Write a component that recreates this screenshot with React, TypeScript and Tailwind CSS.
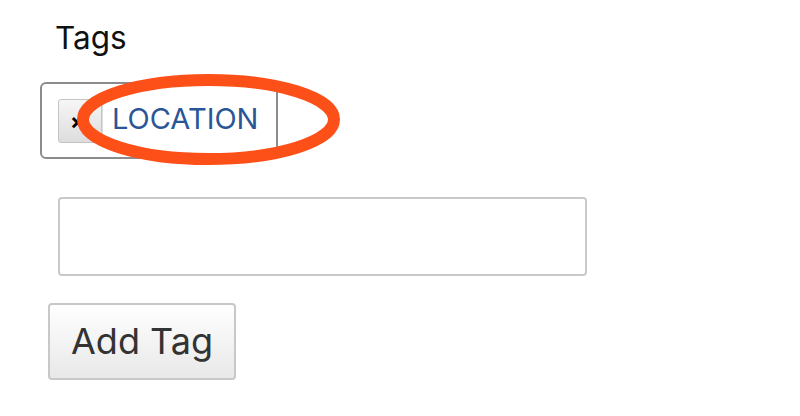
import React from "react"

function Highlight() {
  return (
    <svg className="absolute left-0 top-0 pointer-events-none" width={800} height={416} viewBox="0 0 800 416">
      <ellipse cx={208.5} cy={119.5} rx={125.5} ry={39.5} fill="none" stroke="#fd4f18" strokeWidth={12} />
    </svg>
  )
}

export default function App() {
  return (
    <main className="relative w-[800px] h-[416px] bg-white font-['Inter','Lato',sans-serif] overflow-hidden">
      <div className="flex flex-col items-start">
        {/* Label */}
        <label className="ml-[55px] mt-[22px] text-[31.5px] leading-[31px] text-[#111]">Tags</label>

        {/* Tag list */}
        <div className="ml-[40px] mt-[29px] w-[238px] h-[77px] border-2 border-[#8c8c8c] rounded-[6px] flex items-center pl-[16px]">
          <button className="w-[44px] h-[44px] border border-[#c4c4c4] rounded-[3px] bg-gradient-to-b from-[#f6f6f6] to-[#dddddd] flex items-center pl-[11px] text-[22px] font-bold leading-none text-black">
            ×
          </button>
          <span className="h-[54px] flex items-center border-l border-[#dddddd] pl-[9px] text-[29px] leading-none text-[#2a5698] pb-[5px]">
            LOCATION
          </span>
        </div>

        {/* New tag input */}
        <input
          type="text"
          className="ml-[58px] mt-[38px] w-[529px] h-[79px] border-2 border-[#c9c9c9] rounded-[4px] outline-none px-3 text-[24px]"
        />

        {/* Submit */}
        <button className="ml-[48px] mt-[27px] w-[188px] h-[77px] border-2 border-[#c8c8c8] rounded-[4px] bg-gradient-to-b from-[#ffffff] to-[#e8e8e8] flex items-center justify-center text-[36px] leading-none text-[#333] pb-[2px]">
          Add Tag
        </button>
      </div>
      <Highlight />
    </main>
  )
}
